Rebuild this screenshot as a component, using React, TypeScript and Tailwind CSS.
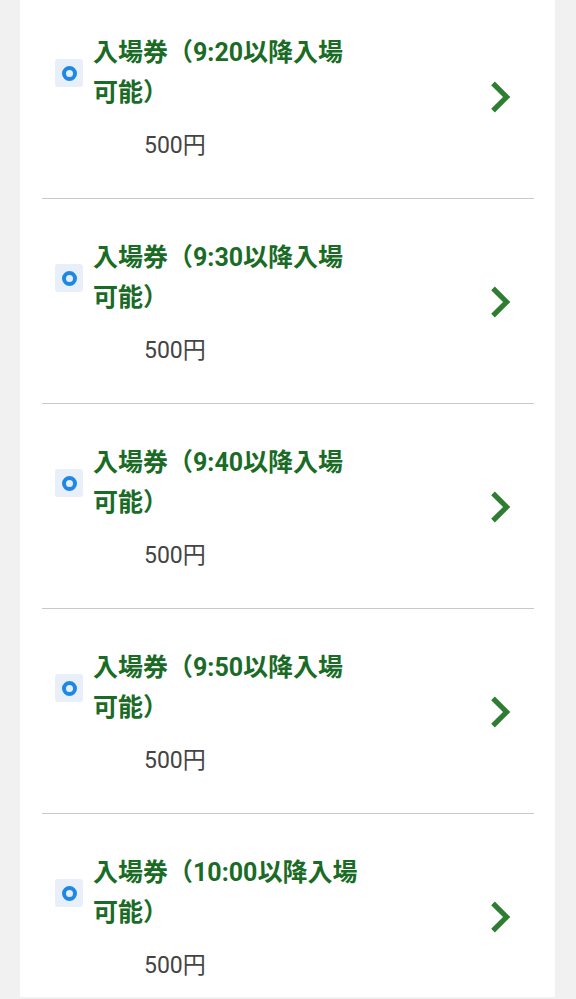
import * as React from 'react'

interface Ticket {
  time: string
  price: string
}

const tickets: Ticket[] = [
  { time: '9:20', price: '500円' },
  { time: '9:30', price: '500円' },
  { time: '9:40', price: '500円' },
  { time: '9:50', price: '500円' },
  { time: '10:00', price: '500円' },
]

function ChevronRight() {
  return (
    <svg viewBox="0 0 24 24" className="h-[62px] w-[62px] fill-[#2e7d32]">
      <path d="M10 6L8.59 7.41 13.17 12l-4.58 4.59L10 18l6-6z" />
    </svg>
  )
}

function TicketRow({ ticket, last }: { ticket: Ticket; last: boolean }) {
  return (
    <div
      className={
        'flex items-center pt-[39px] pb-[37px] ' +
        (last ? '' : 'border-b border-[#c8c8c8]')
      }
    >
      <div className="flex-1">
        <div className="flex items-center">
          <div className="ml-[13px] mr-[10px] flex h-[28px] w-[28px] items-center justify-center rounded-[3px] bg-[#e9eff9]">
            <div className="h-[15px] w-[15px] rounded-full border-[4px] border-[#1e88e5]" />
          </div>
          <p className="w-[270px] text-[25px] font-bold leading-[40px] text-[#1a6b26] [font-family:Roboto,'Noto_Sans_CJK_JP',sans-serif]">
            入場券（{ticket.time}以降入場可能）
          </p>
        </div>
        <p className="mt-[18px] ml-[102px] w-fit text-[23px] leading-[30px] text-[#444444] [font-family:Roboto,'Noto_Sans_CJK_JP',sans-serif]">
          {ticket.price}
        </p>
      </div>
      <div className="mr-[3px]">
        <ChevronRight />
      </div>
    </div>
  )
}

export default function App() {
  return (
    <div className="h-[999px] overflow-hidden bg-[#f1f1f1]">
      <div className="ml-[20px] h-[997px] w-[535px] overflow-hidden bg-white">
        <div className="-mt-[6px] ml-[22px] mr-[21px]">
          {tickets.map((t, i) => (
            <TicketRow key={t.time} ticket={t} last={i === tickets.length - 1} />
          ))}
        </div>
      </div>
    </div>
  )
}
